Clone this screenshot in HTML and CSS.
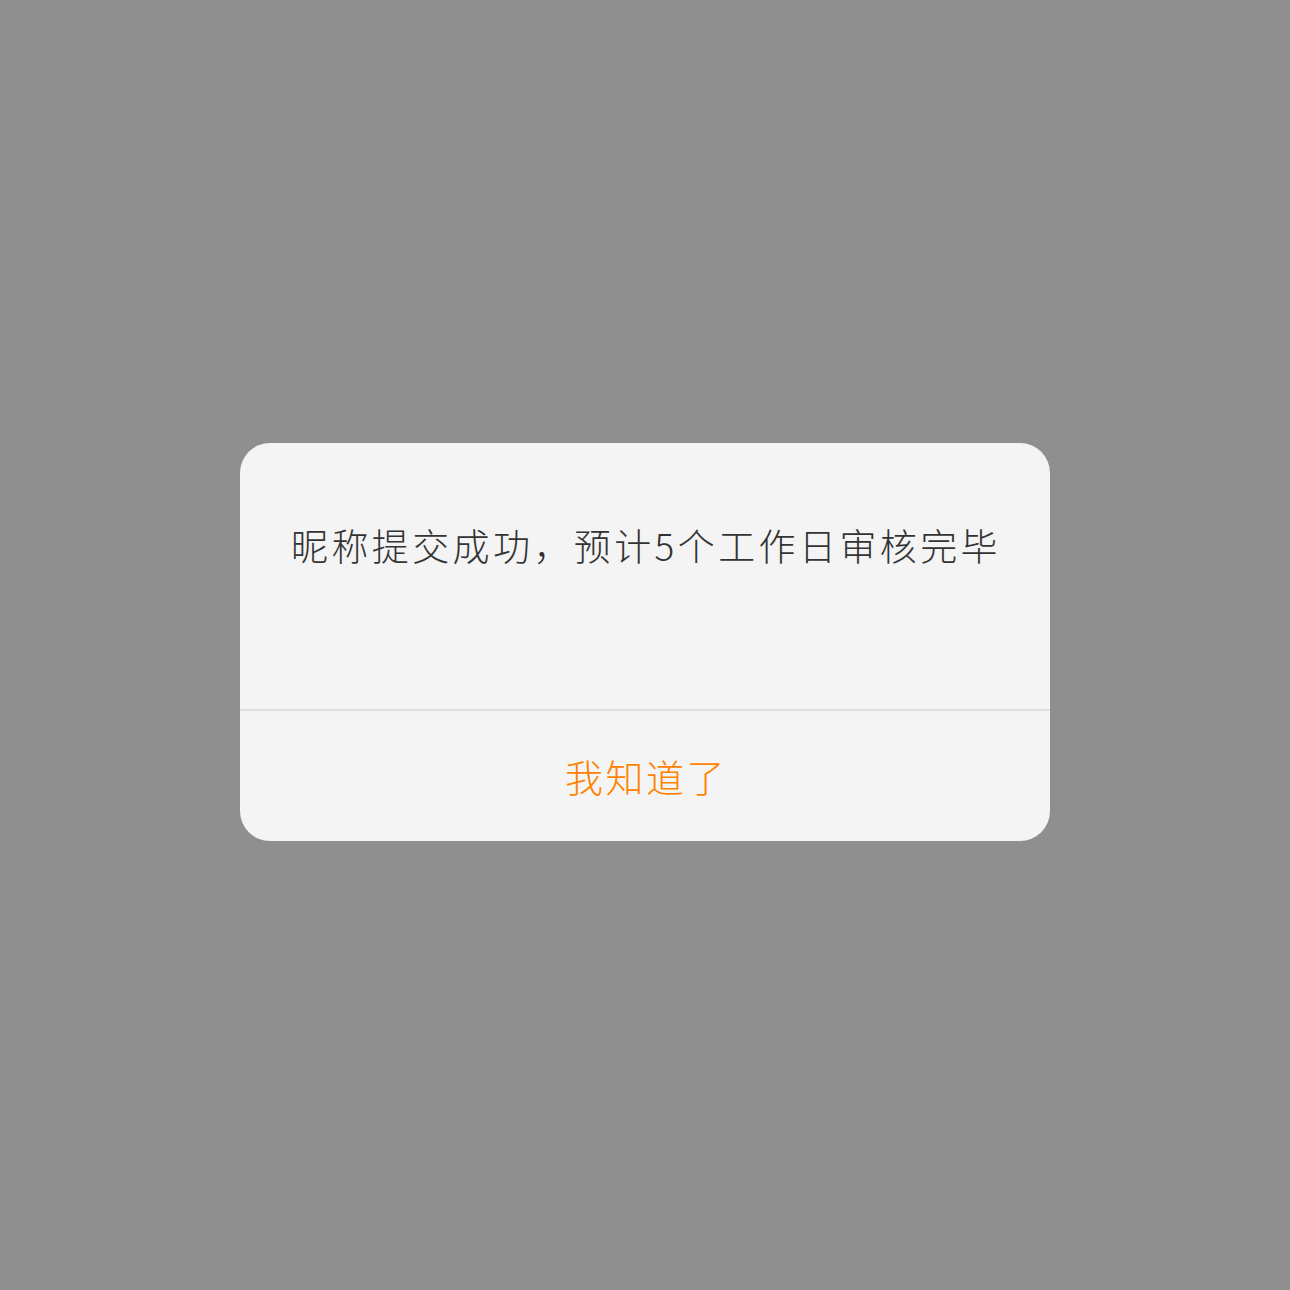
FILE: index.html
```html
<!DOCTYPE html>
<html lang="zh-CN">
<head>
<meta charset="utf-8">
<title>提示</title>
<link rel="stylesheet" href="styles.css">
</head>
<body>
<div class="overlay">
  <div class="dialog">
    <div class="dialog-body">
      <p class="message">昵称提交成功，预计5个工作日审核完毕</p>
    </div>
    <div class="dialog-footer">
      <button class="confirm">我知道了</button>
    </div>
  </div>
</div>
</body>
</html>
```

FILE: styles.css
```css
html, body {
  margin: 0;
  padding: 0;
  background: #8f8f8f;
}
.overlay {
  width: 1290px;
  height: 1290px;
  box-sizing: border-box;
  padding-bottom: 7px;
  display: flex;
  align-items: center;
  justify-content: center;
  font-family: "Noto Sans CJK SC", "Noto Sans", sans-serif;
}
.dialog {
  width: 810px;
  background: #f4f4f4;
  border-radius: 30px;
  overflow: hidden;
}
.dialog-body {
  height: 268px;
  box-sizing: border-box;
  padding-top: 76px;
  border-bottom: 2px solid #dfdfdf;
}
.message {
  margin: 0 0 0 2px;
  text-align: center;
  font-size: 37px;
  font-weight: 300;
  line-height: 52px;
  color: #333333;
  letter-spacing: 3.4px;
}
.dialog-footer {
  height: 130px;
  display: flex;
  align-items: center;
  justify-content: center;
}
.confirm {
  border: none;
  background: none;
  padding: 0 0 0 2px;
  font-family: inherit;
  font-size: 38px;
  font-weight: 300;
  line-height: 52px;
  color: #ff8200;
  letter-spacing: 2.5px;
  margin-top: 0;
}
```
